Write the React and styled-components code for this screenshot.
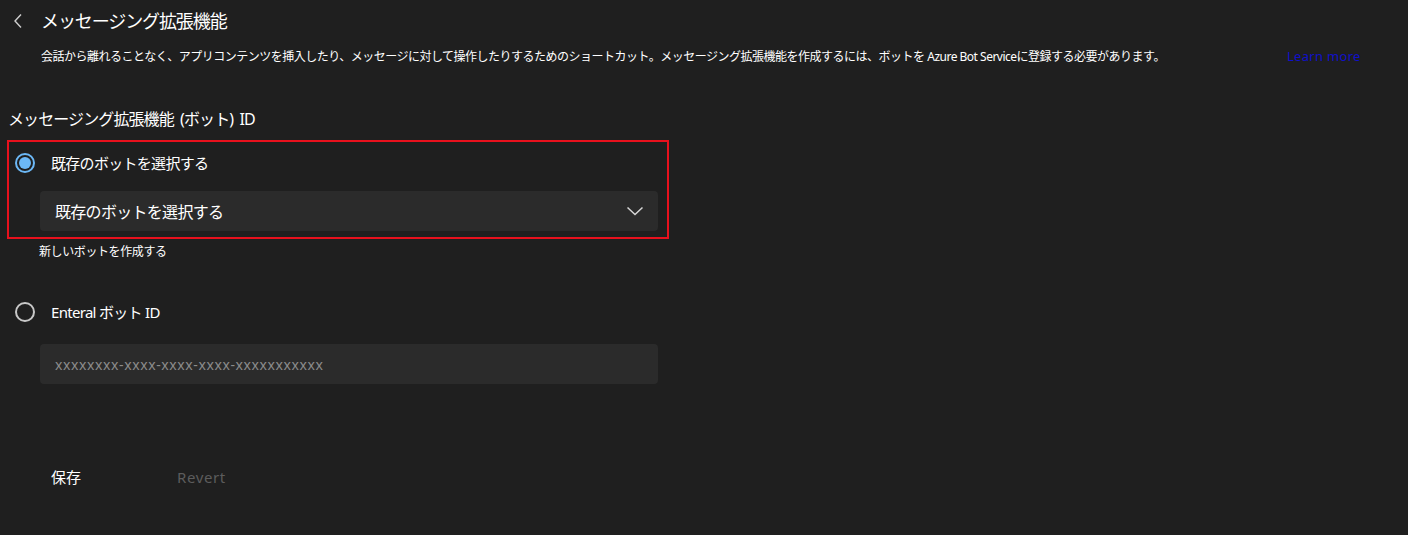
import React from 'react';
import styled, { createGlobalStyle } from 'styled-components';

const GlobalStyle = createGlobalStyle`
    html, body {
        margin: 0;
        padding: 0;
        background: #1f1f1f;
    }
    body {
        font-family: "Noto Sans", "Noto Sans CJK JP", sans-serif;
        color: #ffffff;
    }
`;

// Page wrapper
const Page = styled.div`
    width: 1408px;
    height: 535px;
    background: #1f1f1f;
    box-sizing: border-box;
    padding: 8px 0 0 0;
    overflow: hidden;
`;

// Header with back arrow and title
const Header = styled.div`
    display: flex;
    align-items: center;
    gap: 16px;
    padding-left: 11px;
    height: 26px;
`;

const BackButton = styled.button`
    background: none;
    border: none;
    padding: 0;
    width: 14px;
    height: 18px;
    display: flex;
    align-items: center;
    justify-content: center;
    cursor: pointer;
`;

const Title = styled.h1`
    margin: 0;
    font-size: 18px;
    font-weight: 400;
    line-height: 26px;
    letter-spacing: -1.1px;
`;

const DescRow = styled.div`
    display: flex;
    align-items: baseline;
    padding-left: 41px;
    margin-top: 12px;
    height: 20px;
`;

const Description = styled.p`
    margin: 0;
    font-size: 12px;
    line-height: 20px;
    letter-spacing: -0.5px;
    width: 1246px;
    white-space: nowrap;
`;

const LearnMore = styled.a`
    font-size: 13px;
    line-height: 20px;
    letter-spacing: 0.3px;
    color: #1010c8;
    text-decoration: none;
`;

const SectionLabel = styled.div`
    margin-top: 42px;
    padding-left: 8px;
    font-size: 16px;
    line-height: 22px;
    letter-spacing: -0.9px;
    word-spacing: 3px;
`;

// Red highlight around the first option
const Highlight = styled.div`
    margin: 10px 0 0 7px;
    width: 662px;
    height: 99px;
    box-sizing: border-box;
    border: 2px solid #e8111d;
    padding: 8px 8px 0 6px;
`;

const OptionRow = styled.label`
    display: flex;
    align-items: center;
    gap: 16px;
    height: 26px;
    cursor: pointer;
`;

const Radio = styled.span`
    width: 20px;
    height: 20px;
    box-sizing: border-box;
    border-radius: 50%;
    border: 2px solid ${p => (p.checked ? '#6cb8f6' : '#c8c8c8')};
    display: flex;
    align-items: center;
    justify-content: center;
    flex-shrink: 0;

    &::after {
        content: '';
        width: 12px;
        height: 12px;
        border-radius: 50%;
        background: ${p => (p.checked ? '#6cb8f6' : 'transparent')};
    }
`;

const OptionText = styled.span`
    font-size: 15px;
    line-height: 22px;
    letter-spacing: -0.7px;
    color: #ffffff;
`;

const Field = styled.div`
    margin: ${p => p.top}px 0 0 ${p => p.left}px;
    width: 618px;
    height: 40px;
    box-sizing: border-box;
    border-radius: 4px;
    background: #2b2b2b;
    display: flex;
    align-items: center;
    justify-content: space-between;
    padding: 0 14px 0 15px;
`;

const FieldText = styled.span`
    font-size: ${p => p.size}px;
    letter-spacing: ${p => (p.muted ? '0.6px' : '-0.7px')};
    color: ${p => (p.muted ? '#8c8c8c' : '#ffffff')};
`;

const SubLink = styled.div`
    margin: 4px 0 0 39px;
    font-size: 12px;
    line-height: 18px;
    letter-spacing: -0.4px;
`;

const SecondOption = styled.div`
    margin-top: 38px;
    padding-left: 15px;
`;

const Actions = styled.div`
    display: flex;
    align-items: center;
    gap: 96px;
    margin-top: 82px;
    padding-left: 51px;
`;

const ActionButton = styled.button`
    background: none;
    border: none;
    padding: 0;
    font-family: inherit;
    font-size: 15px;
    line-height: 22px;
    letter-spacing: ${p => (p.disabled ? '0.6px' : '0')};
    color: ${p => (p.disabled ? '#5c5c5c' : '#ffffff')};
    cursor: ${p => (p.disabled ? 'default' : 'pointer')};
`;

const Chevron = ({ dir = 'down' }) =>
    dir === 'left' ? (
        <svg width="10" height="16" viewBox="0 0 10 16">
            <path d="M8 1.5 L2 8 L8 14.5" fill="none" stroke="#cfcfcf" strokeWidth="1.4" />
        </svg>
    ) : (
        <svg width="18" height="10" viewBox="0 0 18 10">
            <path d="M1.5 1.5 L9 8.5 L16.5 1.5" fill="none" stroke="#d6d6d6" strokeWidth="1.5" />
        </svg>
    );

export default function App() {
    return (
        <Page>
            <GlobalStyle />
            <Header>
                <BackButton aria-label="戻る">
                    <Chevron dir="left" />
                </BackButton>
                <Title>メッセージング拡張機能</Title>
            </Header>

            <DescRow>
                <Description>
                    会話から離れることなく、アプリコンテンツを挿入したり、メッセージに対して操作したりするためのショートカット。メッセージング拡張機能を作成するには、ボットを Azure Bot Serviceに登録する必要があります。
                </Description>
                <LearnMore href="#">Learn more</LearnMore>
            </DescRow>

            <SectionLabel>メッセージング拡張機能 (ボット) ID</SectionLabel>

            <Highlight>
                <OptionRow>
                    <Radio checked />
                    <OptionText>既存のボットを選択する</OptionText>
                </OptionRow>
                <Field top={15} left={25}>
                    <FieldText size={16}>既存のボットを選択する</FieldText>
                    <Chevron />
                </Field>
            </Highlight>

            <SubLink>新しいボットを作成する</SubLink>

            <SecondOption>
                <OptionRow>
                    <Radio />
                    <OptionText>Enteral ボット ID</OptionText>
                </OptionRow>
            </SecondOption>
            <Field top={19} left={40}>
                <FieldText size={14} muted>xxxxxxxx-xxxx-xxxx-xxxx-xxxxxxxxxxx</FieldText>
            </Field>

            <Actions>
                <ActionButton>保存</ActionButton>
                <ActionButton disabled>Revert</ActionButton>
            </Actions>
        </Page>
    );
}
